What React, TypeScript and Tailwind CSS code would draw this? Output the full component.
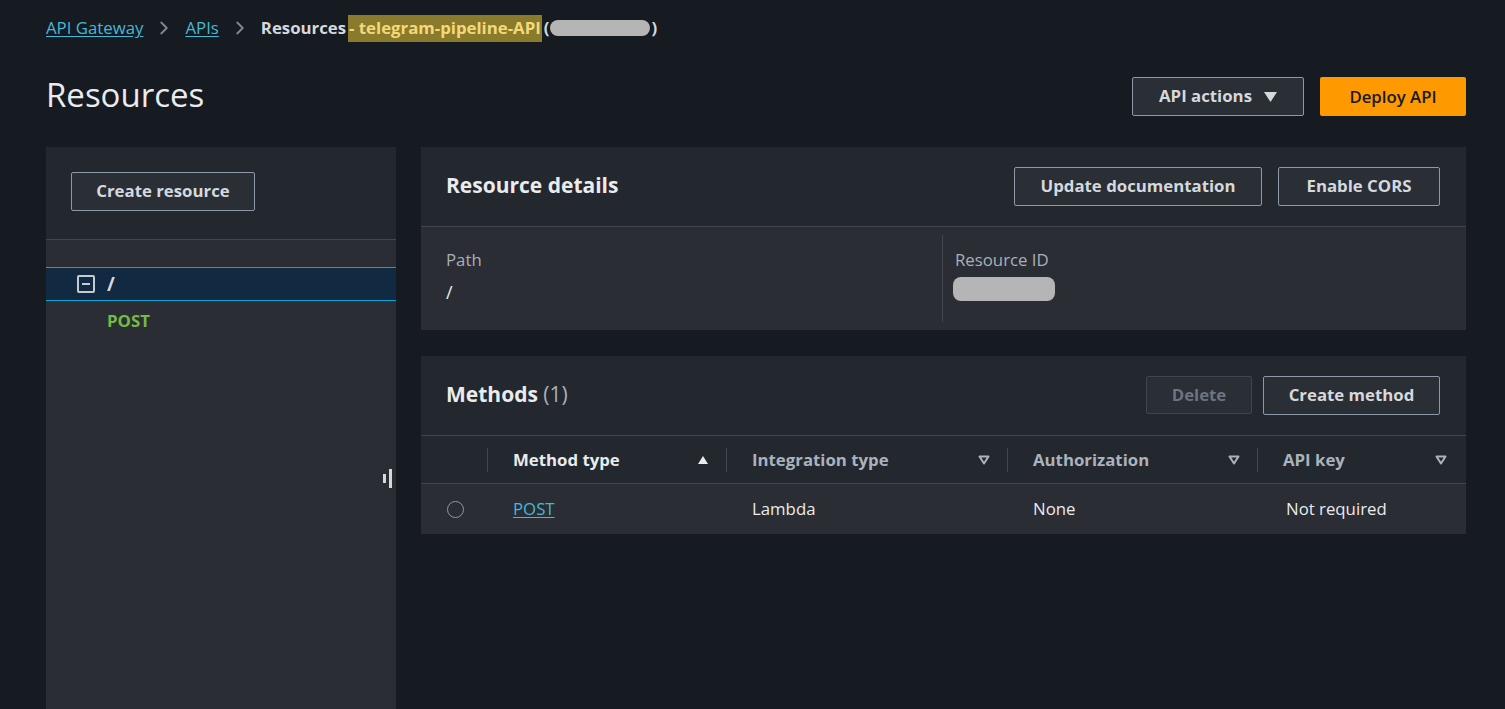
import { ChevronRight } from 'lucide-react'

const btn =
  'h-[39px] px-[20px] rounded-[2px] border border-[#8d99a8] bg-[#2a2e35] text-[16.8px] leading-none font-bold text-[#d5d9dd] flex items-center justify-center'

function SortDown() {
  return (
    <svg width="12" height="10" viewBox="0 0 12 10" className="shrink-0">
      <path d="M1.5 1.5h9L6 8.5z" fill="none" stroke="#aab3bd" strokeWidth="2" strokeLinejoin="round" />
    </svg>
  )
}

function SortUp() {
  return (
    <svg width="12" height="10" viewBox="0 0 12 10" className="shrink-0">
      <path d="M1 9h10L6 1z" fill="#e9ebed" />
    </svg>
  )
}

type Col = { key: string; label: string; width: string; active?: boolean }

const cols: Col[] = [
  { key: 'method', label: 'Method type', width: 'w-[239px]', active: true },
  { key: 'integration', label: 'Integration type', width: 'w-[281px]' },
  { key: 'auth', label: 'Authorization', width: 'w-[250px]' },
  { key: 'apikey', label: 'API key', width: 'flex-1' },
]

function Breadcrumbs() {
  return (
    <nav className="h-[56px] flex items-center text-[16.8px]">
      <a className="text-[#44b9d6] underline underline-offset-2">API Gateway</a>
      <ChevronRight className="mx-[10px] text-[#7d8998]" size={22} strokeWidth={2} />
      <a className="text-[#44b9d6] underline underline-offset-2">APIs</a>
      <ChevronRight className="mx-[10px] text-[#7d8998]" size={22} strokeWidth={2} />
      <span className="font-bold text-[#d5d9dd]">Resources</span>
      <span className="ml-[2px] font-bold text-[#f3d97a] bg-[#8a7a2c] h-[27px] px-[1px] flex items-center">
        - telegram-pipeline-API
      </span>
      <span className="flex items-center text-[#d5d9dd] font-bold ml-[2px]">
        (
        <span className="inline-block w-[100px] h-[16px] rounded-full bg-[#b5b5b5] mx-[1px]" />)
      </span>
    </nav>
  )
}

function ResourceTree() {
  return (
    <aside className="relative w-[350px] h-[562px] shrink-0 bg-[#2a2d33]">
      <div className="bg-[#23272e] pt-[25px] pb-[28px] pl-[25px] border-b border-[#41464e]">
        <button className={btn + ' w-[184px]'}>Create resource</button>
      </div>
      <div className="pt-[27px]">
        <div className="h-[34px] flex items-center bg-[#112a42] border-y border-[#0aa5d8] pl-[31px]">
          <span className="w-[18px] h-[18px] border-2 border-[#c6cbd1] rounded-[2px] flex items-center justify-center">
            <span className="w-[8px] h-[2px] bg-[#c6cbd1]" />
          </span>
          <span className="ml-[12px] text-[19px] font-bold text-[#d5d9dd]">/</span>
        </div>
        <div className="h-[40px] flex items-center pl-[61px] text-[16.8px] font-bold text-[#76b947]">POST</div>
      </div>
      <div className="absolute left-[337px] top-[322px] flex items-center gap-[3px]">
        <span className="w-[3px] h-[9px] bg-[#d5d9dd]" />
        <span className="w-[3px] h-[19px] bg-[#d5d9dd]" />
      </div>
    </aside>
  )
}

function ResourceDetails() {
  return (
    <section>
      <div className="h-[80px] bg-[#23272e] border-b border-[#41464e] flex items-center justify-between pl-[25px] pr-[26px]">
        <h2 className="text-[21px] leading-none font-bold text-[#e9ebed] -mt-[3px]">Resource details</h2>
        <div className="flex gap-[16px]">
          <button className={btn + ' w-[248px]'}>Update documentation</button>
          <button className={btn + ' w-[162px]'}>Enable CORS</button>
        </div>
      </div>
      <div className="bg-[#2a2d33] py-[8px] flex">
        <div className="w-[522px] border-r border-[#41464e] pl-[25px] pt-[13px] pb-[18px]">
          <div className="text-[16.8px] leading-[24px] text-[#a8b0b9]">Path</div>
          <div className="mt-[8px] text-[18px] leading-[24px] text-[#e9ebed]">/</div>
        </div>
        <div className="pl-[12px] pt-[13px]">
          <div className="text-[16.8px] leading-[24px] text-[#a8b0b9]">Resource ID</div>
          <div className="mt-[5px] -ml-[2px] w-[102px] h-[24px] rounded-[8px] bg-[#b5b5b5]" />
        </div>
      </div>
    </section>
  )
}

function Methods() {
  return (
    <section className="mt-[26px]">
      <div className="h-[80px] bg-[#23272e] border-b border-[#41464e] flex items-center justify-between pl-[25px] pr-[26px]">
        <h2 className="text-[21px] leading-none text-[#e9ebed] -mt-[3px]">
          <span className="font-bold">Methods</span> <span className="text-[#a8b0b9]">(1)</span>
        </h2>
        <div className="flex gap-[11px]">
          <button className="h-[38px] w-[106px] rounded-[2px] border border-[#41464e] bg-[#2a2e35] text-[16.8px] font-bold text-[#6b7480]">
            Delete
          </button>
          <button className={btn + ' w-[177px] h-[38px]'}>Create method</button>
        </div>
      </div>
      <div className="h-[48px] bg-[#23272e] border-b border-[#41464e] flex items-center">
        <div className="w-[67px] h-[24px] border-r border-[#41464e]" />
        {cols.map((c, i) => (
          <div
            key={c.key}
            className={
              c.width +
              ' h-[24px] flex items-center justify-between pl-[25px] ' +
              (i < cols.length - 1 ? 'pr-[17px] border-r border-[#41464e]' : 'pr-[19px]')
            }
          >
            <span className={'text-[16.8px] font-bold ' + (c.active ? 'text-[#e9ebed]' : 'text-[#aab3bd]')}>
              {c.label}
            </span>
            {c.active ? <SortUp /> : <SortDown />}
          </div>
        ))}
      </div>
      <div className="h-[50px] bg-[#2a2d33] flex items-center text-[16.8px] text-[#e9ebed]">
        <div className="w-[67px] pl-[26px]">
          <span className="block w-[17px] h-[17px] rounded-full border border-[#8d99a8]" />
        </div>
        <div className="w-[239px] pl-[25px]">
          <a className="text-[#44b9d6] underline underline-offset-2">POST</a>
        </div>
        <div className="w-[281px] pl-[25px]">Lambda</div>
        <div className="w-[250px] pl-[25px]">None</div>
        <div className="flex-1 pl-[28px]">Not required</div>
      </div>
    </section>
  )
}

export default function App() {
  return (
    <div className="min-h-screen bg-[#161a21] pl-[46px] pr-[39px] font-['Open_Sans',sans-serif] overflow-hidden">
      <Breadcrumbs />
      <header className="mt-[21px] mb-[31px] h-[39px] flex items-center justify-between">
        <h1 className="text-[33px] leading-none text-[#e9ebed] -mt-[4px]">Resources</h1>
        <div className="flex gap-[16px]">
          <button className={btn + ' w-[172px] gap-[12px]'}>
            API actions
            <svg width="13" height="10" viewBox="0 0 13 10">
              <path d="M0 0h13L6.5 10z" fill="#d5d9dd" />
            </svg>
          </button>
          <button className="h-[39px] w-[146px] rounded-[2px] bg-[#ff9900] text-[16.8px] font-semibold text-[#16191f]">
            Deploy API
          </button>
        </div>
      </header>
      <main className="flex gap-[25px]">
        <ResourceTree />
        <div className="flex-1">
          <ResourceDetails />
          <Methods />
        </div>
      </main>
    </div>
  )
}
